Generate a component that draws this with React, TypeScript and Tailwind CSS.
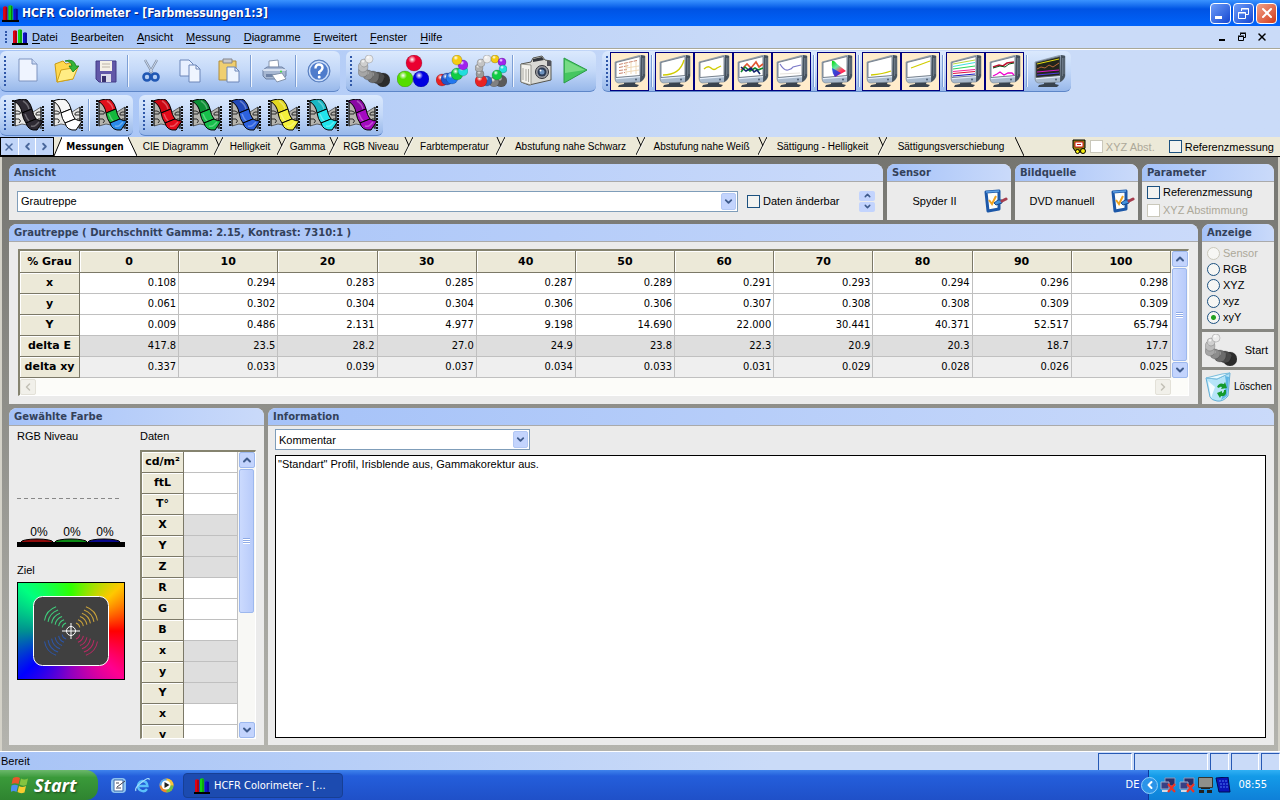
import { useState } from "react"
import type { ReactNode } from "react"
import { ChevronDown, ChevronLeft, ChevronRight, ChevronUp, X } from "lucide-react"

const menus = ["Datei", "Bearbeiten", "Ansicht", "Messung", "Diagramme", "Erweitert", "Fenster", "Hilfe"]

const tabs = [
  { label: "CIE Diagramm", width: "w-[77px]" },
  { label: "Helligkeit", width: "w-[54px]" },
  { label: "Gamma", width: "w-[43px]" },
  { label: "RGB Niveau", width: "w-[66px]" },
  { label: "Farbtemperatur", width: "w-[83px]" },
  { label: "Abstufung nahe Schwarz", width: "w-[131px]" },
  { label: "Abstufung nahe Weiß", width: "w-[113px]" },
  { label: "Sättigung - Helligkeit", width: "w-[111px]" },
  { label: "Sättigungsverschiebung", width: "w-[128px]" },
]

const levels = ["0", "10", "20", "30", "40", "50", "60", "70", "80", "90", "100"]

const rows = [
  { name: "x", bg: "bg-white", values: ["0.108", "0.294", "0.283", "0.285", "0.287", "0.289", "0.291", "0.293", "0.294", "0.296", "0.298"] },
  { name: "y", bg: "bg-white", values: ["0.061", "0.302", "0.304", "0.304", "0.306", "0.306", "0.307", "0.308", "0.308", "0.309", "0.309"] },
  { name: "Y", bg: "bg-white", values: ["0.009", "0.486", "2.131", "4.977", "9.198", "14.690", "22.000", "30.441", "40.371", "52.517", "65.794"] },
  { name: "delta E", bg: "bg-[#dedede]", values: ["417.8", "23.5", "28.2", "27.0", "24.9", "23.8", "22.3", "20.9", "20.3", "18.7", "17.7"] },
  { name: "delta xy", bg: "bg-[#efefef]", values: ["0.337", "0.033", "0.039", "0.037", "0.034", "0.033", "0.031", "0.029", "0.028", "0.026", "0.025"] },
]

const colorRows = ["cd/m²", "ftL", "T°", "X", "Y", "Z", "R", "G", "B", "x", "y", "Y", "x", "y"]
const grayRows = [3, 4, 5, 9, 10, 11]

/* ---------- icons ---------- */

function Svg({ children }: { children: ReactNode }) {
  return (
    <svg width="32" height="32" viewBox="0 0 32 32" fill="none" className="shrink-0" aria-hidden="true">
      {children}
    </svg>
  )
}

function AppLogo({ size = 16 }: { size?: number }) {
  return (
    <svg width={size} height={size} viewBox="0 0 16 16" className="shrink-0" aria-hidden="true">
      <path d="M0 14h16v2H0z" fill="#000" />
      <path d="M1 2q2-1.500 4 0v12H1z" fill="#e00012" />
      <path d="M6 1q2-1.500 4 0v13H6z" fill="#12d412" />
      <path d="M11 4q2-1.500 4 0v10h-4z" fill="#1010c8" />
      <path d="M4 2v12M9 1v13M14 4v10" stroke="#000" strokeOpacity=".4" />
    </svg>
  )
}

function Ball({ x, y, r, color }: { x: number; y: number; r: number; color: string }) {
  const id = "ball" + color.slice(1)
  return (
    <>
      <radialGradient id={id} cx=".38" cy=".28" r=".7">
        <stop offset="0" stopColor="#fff" />
        <stop offset=".35" stopColor={color} />
        <stop offset="1" stopColor={color} />
      </radialGradient>
      <circle cx={x} cy={y} r={r} fill={`url(#${id})`} stroke="#000" strokeOpacity=".3" strokeWidth=".6" />
    </>
  )
}

function Balls({ list }: { list: [number, number, number, string][] }) {
  return (
    <Svg>
      {list.map(([x, y, r, color], i) => (
        <Ball key={i} x={x} y={y} r={r} color={color} />
      ))}
    </Svg>
  )
}

const grayBalls: [number, number, number, string][] = [
  [25, 25, 7, "#2c2c2c"], [20, 23, 6, "#4a4a4a"], [15, 22, 6, "#6c6c6c"], [10, 20, 5, "#8c8c8c"],
  [5, 17, 5, "#a6a6a6"], [5, 12, 5, "#bcbcbc"], [6, 8, 4, "#cfcfcf"], [11, 4, 4, "#ececec"],
]
const primaryBalls: [number, number, number, string][] = [
  [17, 8, 8, "#ea0030"], [8, 24, 8, "#55dd00"], [24, 24, 8, "#0000e0"],
]
const colorBalls: [number, number, number, string][] = [
  [6, 25, 6, "#e82222"], [11, 24, 6, "#2255cc"], [16, 23, 6, "#2277ee"], [21, 19, 6, "#11cc44"],
  [27, 16, 5, "#22dddd"], [27, 10, 5, "#a022ee"], [21, 5, 5, "#f5cc11"],
]
const ringBalls: [number, number, number, string][] = [
  [26, 26, 6, "#5a5a5a"], [19, 27, 5, "#808080"], [12, 26, 5, "#3366bb"], [6, 26, 6, "#e82222"],
  [5, 19, 4, "#9a9a9a"], [4, 13, 4, "#b0b0b0"], [6, 8, 4, "#c4c4c4"], [12, 4, 4, "#ececec"],
  [20, 4, 4, "#f5cc11"], [27, 7, 4, "#a022ee"], [28, 14, 4, "#22dddd"], [22, 20, 5, "#11cc44"],
]

function Monitor({ children, dark = false }: { children?: ReactNode; dark?: boolean }) {
  return (
    <Svg>
      <path d="M10 26h12l-1 3 4 1-2 2H4l1-2 5-1z" fill="#39434e" />
      <path d="M1 7L27 0l4 1v20q-1 4-5 6L4 28q-3-1-3-4z" fill="#a9bacd" stroke="#76838f" strokeWidth=".6" />
      <path d="M27 0l4 1v20q-1 4-5 6z" fill="#46525e" />
      <path d="M28.500 3v18M30 3v16" stroke="#8391a0" strokeWidth=".6" />
      <path d="M2 23.500l24-2" stroke="#e4edf8" strokeWidth="1.500" />
      <path d="M2 7.500L26 1.500v19L2 22.500z" fill={dark ? "#22251c" : "#fff"} stroke="#5f6b77" strokeWidth=".8" />
      <circle cx="22" cy="24.500" r="1" fill="#4f5f74" />
      {children}
    </Svg>
  )
}

function Film({ colors, white = false }: { colors: [string, string, string]; white?: boolean }) {
  return (
    <Svg>
      <path d="M3 3h6l12 10 8-5v21l-9-2-10-2-7 2z" fill={white ? "#e8e8e6" : "#b5b4ae"} stroke="#444" strokeWidth=".8" />
      <path d="M1 1v27M31 7v25" stroke="#111" strokeWidth="2" strokeDasharray="2 1" />
      <path d="M3 3v24M29 8v22" stroke="#111" />
      <path d="M3 12h3q4 1 2 3H3M3 20h4q3 2 0 4M29 13h-3q-3 1-2 3h5M29 20h-3" stroke="#2a2a2a" />
      <path d="M2 2Q10-1 15 1q4 4 5 9l-10 4Q9 6 2 2z" fill={colors[0]} stroke="#000" />
      <path d="M20 10q1 6 4 10l-10 4q-3-4-4-10z" fill={colors[1]} stroke="#000" />
      <path d="M24 20q3 2 7 2l-6 9q-9 1-11-7z" fill={colors[2]} stroke="#000" />
      <path d="M11 2q5 3 6 8M13 15q2 5 4 7M19 27q3 1 5-1l3-3" stroke="#fff" strokeOpacity=".3" strokeWidth="1.500" />
    </Svg>
  )
}

const NewIcon = () => (
  <Svg>
    <path d="M7 4h13l5 5v17H7z" fill="#eff4ff" stroke="#7d93bf" />
    <path d="M20 4v5h5" fill="#c9d8f4" stroke="#7d93bf" />
  </Svg>
)
const OpenIcon = () => (
  <Svg>
    <path d="M4 9l8-3 3 3 7-2v17L6 27z" fill="#ffd84e" stroke="#c79a14" />
    <path d="M10 15l17-3-5 12L6 27z" fill="#ffec84" stroke="#d0a21a" />
    <path d="M14 6q9-3 11 5h3l-6 6-4-6h3q-1-5-7-5z" fill="#35b53a" stroke="#147a1a" strokeWidth=".8" />
  </Svg>
)
const SaveIcon = () => (
  <Svg>
    <path d="M6 6h20v21H9l-3-3z" fill="#6258a8" stroke="#423a86" />
    <path d="M10 6h12v10H10z" fill="#f6f1e6" />
    <path d="M12 9h8M12 12h8" stroke="#bdb4a8" />
    <path d="M11 19h10v8H11z" fill="#dcdcea" />
    <path d="M12 21h4v6h-4z" fill="#38306e" />
  </Svg>
)
const CutIcon = () => (
  <Svg>
    <path d="M10 5l8 14M22 5l-8 14" stroke="#7f8fa8" strokeWidth="2.400" />
    <path d="M10 5l8 14M22 5l-8 14" stroke="#e2ebf7" strokeWidth=".8" />
    <circle cx="12" cy="22" r="3.500" stroke="#2158b4" strokeWidth="2.600" />
    <circle cx="20" cy="22" r="3.500" stroke="#2158b4" strokeWidth="2.600" />
  </Svg>
)
const CopyIcon = () => (
  <Svg>
    <path d="M6 5h9l4 4v12H6z" fill="#e8f0ff" stroke="#6c86b8" />
    <path d="M15 10h7l4 4v13H15z" fill="#eff5ff" stroke="#6c86b8" />
    <path d="M22 10v4h4" stroke="#6c86b8" />
  </Svg>
)
const PasteIcon = () => (
  <Svg>
    <path d="M6 6h17v19H6z" fill="#f0cf70" stroke="#b08c3a" />
    <path d="M10 4h9v4h-9z" fill="#c9c9cc" stroke="#85858a" />
    <path d="M14 12h8l4 4v11H14z" fill="#edf4ff" stroke="#6c86b8" />
    <path d="M22 12v4h4" stroke="#6c86b8" />
  </Svg>
)
const PrintIcon = () => (
  <Svg>
    <path d="M11 6l9-1 1 9H11z" fill="#fff" stroke="#8796ae" />
    <path d="M5 15l4-3h15l4 3v6l-5 3H8l-3-3z" fill="#a6b7d2" stroke="#6d80a3" />
    <path d="M5 15h23" stroke="#e9effa" strokeWidth="1.500" />
    <path d="M8 19h14v3H8z" fill="#6f83a6" />
    <path d="M14 20l10-2 4 6-9 3z" fill="#fff" stroke="#8393ac" />
    <circle cx="23" cy="16.500" r="1" fill="#3edc3e" />
  </Svg>
)
const HelpIcon = () => (
  <Svg>
    <circle cx="16" cy="16" r="11" fill="#4f7ccc" stroke="#5b80bd" />
    <circle cx="16" cy="16" r="9.500" stroke="#cfe0fa" strokeWidth="1.500" />
    <path d="M12.500 13.500q0-4 3.500-4t3.500 3.300q0 2-3.300 4.200V19" stroke="#fff" strokeWidth="2.400" />
    <circle cx="16.200" cy="22" r="1.500" fill="#fff" />
  </Svg>
)
const CameraIcon = () => (
  <Svg>
    <path d="M1 9l10-2 2-4 9-2 3 4 6 1v19L9 30 1 27z" fill="#d9d9d4" stroke="#55554f" />
    <path d="M1 9l10 1v20l-10-3z" fill="#f2f1ec" stroke="#77776f" strokeWidth=".7" />
    <path d="M3 13v12M6 14v12M8.500 14v13" stroke="#aaa9a2" />
    <path d="M13 4l9-2 2 3-11 2z" fill="#33363c" />
    <path d="M27 6h4v5h-4z" fill="#50525a" />
    <circle cx="22" cy="17" r="6.500" fill="#9a9ca2" stroke="#33353b" />
    <circle cx="22" cy="17" r="4.500" fill="#2c3c55" />
    <circle cx="22" cy="17" r="2.500" fill="#6d93c0" />
    <circle cx="20.500" cy="15.500" r="1" fill="#fff" />
  </Svg>
)
const PlayIcon = () => (
  <Svg>
    <path d="M5 3l23 12L5 28z" fill="#45c660" stroke="#2b9b46" strokeLinejoin="round" />
    <path d="M6 5l20 10-20 3z" fill="#83e08f" fillOpacity=".8" />
  </Svg>
)
const SettingsIcon = () => (
  <svg width="26" height="26" viewBox="0 0 26 26" fill="none" aria-hidden="true">
    <path d="M4 4l13-1v18l-11 2z" fill="#fdfdfa" stroke="#1d58a8" strokeWidth="3" strokeLinejoin="round" />
    <path d="M4 4l13-1" stroke="#5da0e4" strokeWidth="1.500" />
    <path d="M7 12l3 4 4-8" stroke="#efa21f" strokeWidth="2" />
    <path d="M12 15l4-3h4v3l-6 2z" fill="#4291dc" stroke="#184a8e" />
    <path d="M20 13l4-2" stroke="#a53c4d" strokeWidth="3" strokeLinecap="round" />
  </svg>
)
const TrashIcon = () => (
  <Svg>
    <path d="M4 7l11 1 13-6-2 23q-5 6-11 5-6-1-7-4z" fill="#b5e4f8" stroke="#63aed6" />
    <path d="M4 7l11 1 13-6-8 1z" fill="#e9f9ff" stroke="#79bddd" />
    <path d="M6 10l7 6-4 11z" fill="#f2fcff" />
    <path d="M23 5q3 10-4 24l6-4 2-19z" fill="#5fb6e4" />
    <path d="M15 16q2-5 7-3l1-2 2 6-6 1 1-2q-2-1-3 1zM24 19q1 7-5 6l-1 2-3-5 5-2v2q2 0 2-3z" fill="#149a2c" />
  </Svg>
)

/* ---------- small building blocks ---------- */

function ToolButton({ label, children, checked = false }: { label: string; children: ReactNode; checked?: boolean }) {
  return (
    <button
      type="button"
      aria-label={label}
      className={`flex h-[39px] w-[39px] items-center justify-center ${checked ? "border border-[#000080] bg-[#ffeccb]" : ""}`}
    >
      {children}
    </button>
  )
}

function ToolBar({ children }: { children: ReactNode }) {
  return (
    <div className="flex h-[41px] items-center rounded-md border-b border-[#5d86c8] bg-linear-to-b from-[#dbe9fd] via-[#c3d8f8] to-[#98b8ea] pr-[2px]">
      <div className="mr-[2px] ml-[4px] h-[30px] border-l-2 border-dotted border-[#2f57a8]" />
      {children}
    </div>
  )
}

function Sep() {
  return (
    <div className="flex w-[6px] justify-center">
      <div className="h-8 w-[2px] border-l border-r border-l-[#7d9fd5] border-r-white/80" />
    </div>
  )
}

function Panel({ title, className = "", children }: { title: string; className?: string; children: ReactNode }) {
  return (
    <section className={`flex min-h-0 flex-col overflow-hidden rounded-t-lg bg-[#ebebeb] ${className}`}>
      <h2 className="h-[18px] shrink-0 truncate border-b border-[#aaa] bg-linear-to-r from-[#a5c2f8] to-[#cadafa] pl-[5px] font-['DejaVu_Sans'] text-[10px] leading-[17px] font-bold text-[#33415a]">
        {title}
      </h2>
      {children}
    </section>
  )
}

function Check({ label, disabled = false }: { label: string; disabled?: boolean }) {
  return (
    <label className={`flex items-center gap-[3px] whitespace-nowrap ${disabled ? "text-[#aca899]" : ""}`}>
      <input
        type="checkbox"
        disabled={disabled}
        className="h-[13px] w-[13px] appearance-none border border-[#1c5180] bg-[#f3f3f1] checked:bg-[#21a121] disabled:border-[#cac8bb] disabled:bg-white"
      />
      {label}
    </label>
  )
}

function ScrollButton({ label, children, disabled = false }: { label: string; children: ReactNode; disabled?: boolean }) {
  return (
    <button
      type="button"
      aria-label={label}
      disabled={disabled}
      className="flex h-[16px] w-[16px] shrink-0 items-center justify-center rounded-xs border border-[#9db8ee] bg-[#c3d4fd] text-[#3f5b8c] disabled:border-[#e3e1d8] disabled:bg-[#f1f0ea] disabled:text-[#c2c0b6]"
    >
      {children}
    </button>
  )
}

function VScroll({ thumb }: { thumb: string }) {
  return (
    <div className="flex w-[17px] shrink-0 flex-col items-center bg-[#f8f8f5]">
      <ScrollButton label="Nach oben">
        <ChevronUp size={12} strokeWidth={4} />
      </ScrollButton>
      <div className="min-h-0 w-[15px] flex-1 py-px">
        <div className={`flex flex-col items-center justify-center gap-px rounded-xs border border-[#9db8ee] bg-linear-to-r from-[#cbdafe] to-[#b8cbfa] ${thumb}`}>
          {[0, 1, 2].map((i) => (
            <div key={i} className="h-px w-[7px] bg-[#8eaae6] shadow-[0_1px_white]" />
          ))}
        </div>
      </div>
      <ScrollButton label="Nach unten">
        <ChevronDown size={12} strokeWidth={4} />
      </ScrollButton>
    </div>
  )
}

function Dropdown({ id, label, value, className }: { id: string; label: string; value: string; className: string }) {
  return (
    <div className={`relative h-[21px] ${className}`}>
      <select
        id={id}
        aria-label={label}
        className="block h-full w-full appearance-none border border-[#7f9db9] bg-white pl-[3px] text-[11px] outline-none"
      >
        <option>{value}</option>
      </select>
      <span className="pointer-events-none absolute top-[2px] right-[2px] flex h-[17px] w-[15px] items-center justify-center rounded-xs border border-[#b3c8f4] bg-[#c3d4fd] text-[#3f5b8c]">
        <ChevronDown size={11} strokeWidth={4} />
      </span>
    </div>
  )
}

function TabEdge() {
  return (
    <svg width="9" height="19" viewBox="0 0 9 19" fill="none" className="shrink-0" aria-hidden="true">
      <path d="M0 18L9 0M1 0l4 9" stroke="#000" />
      <path d="M1 18L9 2" stroke="#fff" strokeOpacity=".7" />
    </svg>
  )
}

/* ---------- sections ---------- */

function TitleBar() {
  return (
    <header className="flex h-[26px] shrink-0 items-center bg-linear-to-b from-[#3a93ff] via-[#0053e4] via-35% to-[#0164fb] pr-[3px] pl-[2px]">
      <AppLogo size={17} />
      <h1 className="flex-1 pl-[3px] font-['DejaVu_Sans_Condensed'] text-[12px] font-bold text-white [text-shadow:1px_1px_#0a1f7a]">
        HCFR Colorimeter - [Farbmessungen1:3]
      </h1>
      <div className="flex gap-[2px]">
        <button type="button" aria-label="Minimieren" className="flex h-[21px] w-[21px] items-end rounded-sm border border-white bg-linear-to-br from-[#6f9cf8] to-[#1544d0] p-1">
          <span className="h-[3px] w-[7px] bg-white" />
        </button>
        <button type="button" aria-label="Wiederherstellen" className="flex h-[21px] w-[21px] items-center justify-center rounded-sm border border-white bg-linear-to-br from-[#6f9cf8] to-[#1544d0]">
          <svg width="13" height="13" viewBox="0 0 13 13" fill="none" stroke="#fff" aria-hidden="true">
            <path d="M4.500 4V1.500h7v6H9M4 2h8M1.500 5.500h7v6h-7zM1 6h8" />
          </svg>
        </button>
        <button type="button" aria-label="Schließen" className="flex h-[21px] w-[21px] items-center justify-center rounded-sm border border-white bg-linear-to-br from-[#f0a088] to-[#d1350c] text-white">
          <X size={16} strokeWidth={3} />
        </button>
      </div>
    </header>
  )
}

function MenuBar() {
  return (
    <nav className="flex h-[23px] shrink-0 items-center border-b border-[#a9a898] bg-linear-to-r from-[#a8c5f6] to-[#cadbf8] to-60% pl-[5px]">
      <div className="mr-[5px] h-[12px] border-l-2 border-dotted border-[#2f57a8]" />
      <AppLogo />
      <div className="flex flex-1 gap-[13px] pl-[4px]">
        {menus.map((m) => (
          <button key={m} type="button">
            <span className="underline underline-offset-2">{m[0]}</span>
            {m.slice(1)}
          </button>
        ))}
      </div>
      <div className="flex gap-[9px] pr-[12px]">
        <button type="button" aria-label="Fenster minimieren" className="flex h-[12px] w-[12px] items-end justify-center pb-[2px]">
          <span className="h-[2px] w-[6px] bg-black" />
        </button>
        <button type="button" aria-label="Fenster wiederherstellen">
          <svg width="10" height="10" viewBox="0 0 10 10" fill="none" stroke="#000" aria-hidden="true">
            <path d="M3.500 3V1.500h5v4H7M3 1h6M1.500 4.500h5v4h-5zM1 4h6" />
          </svg>
        </button>
        <button type="button" aria-label="Fenster schließen">
          <X size={12} strokeWidth={3} />
        </button>
      </div>
    </nav>
  )
}

function ToolBars() {
  return (
    <div className="flex shrink-0 flex-col gap-[3px] border-t border-white bg-linear-to-r from-[#a5c3f6] to-[#cadbf8] to-60% pt-px pb-px">
      <div className="flex gap-[6px]">
        <ToolBar>
          <ToolButton label="Neu"><NewIcon /></ToolButton>
          <ToolButton label="Öffnen"><OpenIcon /></ToolButton>
          <ToolButton label="Speichern"><SaveIcon /></ToolButton>
          <Sep />
          <ToolButton label="Ausschneiden"><CutIcon /></ToolButton>
          <ToolButton label="Kopieren"><CopyIcon /></ToolButton>
          <ToolButton label="Einfügen"><PasteIcon /></ToolButton>
          <Sep />
          <ToolButton label="Drucken"><PrintIcon /></ToolButton>
          <Sep />
          <ToolButton label="Hilfe"><HelpIcon /></ToolButton>
        </ToolBar>
        <ToolBar>
          <ToolButton label="Graustufen messen"><Balls list={grayBalls} /></ToolButton>
          <ToolButton label="Primärfarben messen"><Balls list={primaryBalls} /></ToolButton>
          <ToolButton label="Sättigung messen"><Balls list={colorBalls} /></ToolButton>
          <ToolButton label="Alles messen"><Balls list={ringBalls} /></ToolButton>
          <Sep />
          <ToolButton label="Kamera"><CameraIcon /></ToolButton>
          <ToolButton label="Kontinuierlich messen"><PlayIcon /></ToolButton>
        </ToolBar>
        <ToolBar>
          <ToolButton label="Messungen" checked>
            <Monitor>
              <path d="M5 9.500l18-4M5 12.500l10-2M5 15.500l8-1M5 18.500l6-1" stroke="#c9826c" strokeDasharray="4 1" />
              <path d="M12 8v12M17 7v12M22 6v13M12 13l13-2M12 17l13-2" stroke="#efd9b8" />
            </Monitor>
          </ToolButton>
          <Sep />
          <ToolButton label="Helligkeit" checked>
            <Monitor><path d="M4 20q17 0 21-15" stroke="#d0cc00" strokeWidth="1.300" /></Monitor>
          </ToolButton>
          <ToolButton label="Gamma" checked>
            <Monitor><path d="M6 14q4-4 7-1t6 0l4-2" stroke="#d0cc00" strokeWidth="1.300" /></Monitor>
          </ToolButton>
          <ToolButton label="RGB Niveau" checked>
            <Monitor>
              <path d="M4 15l6-6 4 4 5-6 3 5 4-3" stroke="#e25532" strokeWidth="1.600" />
              <path d="M4 17l4-5 5 4 5-3 3 2 5-2" stroke="#118a2a" strokeWidth="1.600" />
              <path d="M4 12l5 4 5-3 3 4 3-2 3 4" stroke="#10246e" strokeWidth="1.600" />
            </Monitor>
          </ToolButton>
          <ToolButton label="Farbtemperatur" checked>
            <Monitor>
              <path d="M4 9q4 7 8 6t5-3l8-2" stroke="#7a78c8" strokeWidth="1.200" />
              <path d="M4 19l20-1" stroke="#e5e2dd" />
            </Monitor>
          </ToolButton>
          <Sep />
          <ToolButton label="CIE Diagramm" checked>
            <Monitor>
              <linearGradient id="cie" x1="0" y1="0" x2=".7" y2="1">
                <stop offset="0" stopColor="#00d800" />
                <stop offset=".4" stopColor="#66e8a8" />
                <stop offset=".7" stopColor="#f46" />
                <stop offset="1" stopColor="#f03" />
              </linearGradient>
              <path d="M11 6q2-1 5 3l9 7-11 6q-4-8-3-16z" fill="url(#cie)" />
              <path d="M11 13q0 5 3 9l6-4z" fill="#1733e8" fillOpacity=".8" />
            </Monitor>
          </ToolButton>
          <Sep />
          <ToolButton label="Nahe Schwarz" checked>
            <Monitor><path d="M5 20q12-1 20-4" stroke="#d0cc00" strokeWidth="1.300" /></Monitor>
          </ToolButton>
          <ToolButton label="Nahe Weiß" checked>
            <Monitor><path d="M6 13l19-7" stroke="#d0cc00" strokeWidth="1.300" /></Monitor>
          </ToolButton>
          <Sep />
          <ToolButton label="Sättigung" checked>
            <Monitor>
              <path d="M3 9l22-4" stroke="#bcd83c" />
              <path d="M3 11.500l22-4" stroke="#3ce0e0" />
              <path d="M3 14l22-3" stroke="#2bd65c" />
              <path d="M3 16.500l22-2" stroke="#f0209c" />
              <path d="M3 18.500l22-2" stroke="#e01038" />
              <path d="M3 21l22-2" stroke="#1818c0" />
            </Monitor>
          </ToolButton>
          <ToolButton label="Sättigungsverschiebung" checked>
            <Monitor>
              <path d="M4 12l6-2 4 1 4-3 7-1" stroke="#c01030" strokeWidth="1.600" />
              <path d="M4 13l7-2 5 1 4-3 5-1" stroke="#105018" />
              <path d="M4 21l4-2 3-2 4 3 4-2 4 0 2 2" stroke="#f000d0" strokeWidth="1.300" />
            </Monitor>
          </ToolButton>
          <Sep />
          <ToolButton label="Kombiniert">
            <Monitor dark>
              <path d="M3 9l22-5" stroke="#e8e010" />
              <path d="M3 14l4-2 4 1 4-3 4 2 6-4" stroke="#b8673a" />
              <path d="M3 17l22-2" stroke="#d41cc8" />
              <path d="M3 20l22-2" stroke="#5040e0" />
            </Monitor>
          </ToolButton>
        </ToolBar>
      </div>
      <div className="flex gap-[6px]">
        <ToolBar>
          <ToolButton label="Schwarz"><Film colors={["#2e2a33", "#2e2a33", "#2e2a33"]} white /></ToolButton>
          <ToolButton label="Weiß"><Film colors={["#f6f6f6", "#ffffff", "#ffffff"]} white /></ToolButton>
          <Sep />
          <ToolButton label="RGB"><Film colors={["#e0101c", "#14b83c", "#2c8bea"]} /></ToolButton>
        </ToolBar>
        <ToolBar>
          <ToolButton label="Rot"><Film colors={["#cc0614", "#e40a1a", "#e40a1a"]} /></ToolButton>
          <ToolButton label="Grün"><Film colors={["#0c8e34", "#18c04c", "#18c04c"]} /></ToolButton>
          <ToolButton label="Blau"><Film colors={["#2148b8", "#2d62e0", "#2d62e0"]} /></ToolButton>
          <ToolButton label="Gelb"><Film colors={["#e2d820", "#f4f03c", "#f4f03c"]} /></ToolButton>
          <ToolButton label="Cyan"><Film colors={["#18b8c4", "#22e4ec", "#22e4ec"]} /></ToolButton>
          <ToolButton label="Magenta"><Film colors={["#8a08a4", "#a40ac0", "#a40ac0"]} /></ToolButton>
        </ToolBar>
      </div>
    </div>
  )
}

function TabStrip() {
  return (
    <div className="flex h-[20px] shrink-0 border-b border-black bg-[#ece9d8] text-[10px]">
      <div className="flex w-[54px] border border-black bg-[#c1d5f8] text-[#4a689c]">
        <button type="button" aria-label="Tab schließen" className="flex flex-1 items-center justify-center border-r border-white"><X size={12} strokeWidth={3} /></button>
        <button type="button" aria-label="Vorheriger Tab" className="flex flex-1 items-center justify-center border-r border-white"><ChevronLeft size={11} strokeWidth={4} /></button>
        <button type="button" aria-label="Nächster Tab" className="flex flex-1 items-center justify-center"><ChevronRight size={11} strokeWidth={4} /></button>
      </div>
      <svg width="8" height="19" viewBox="0 0 8 19" aria-hidden="true"><path d="M0 19L8 0v19z" fill="#fff" /><path d="M0 19L8 0" stroke="#000" /></svg>
      <button type="button" className="w-[66px] bg-white font-['DejaVu_Sans_Condensed'] font-bold">Messungen</button>
      <svg width="9" height="19" viewBox="0 0 9 19" aria-hidden="true"><path d="M0 0l9 19H0z" fill="#fff" /><path d="M0 0l9 19" stroke="#000" /></svg>
      {tabs.map((t, i) => (
        <div key={t.label} className="flex">
          {i > 0 && <TabEdge />}
          <button type="button" className={`whitespace-nowrap ${t.width}`}>{t.label}</button>
        </div>
      ))}
      <svg width="9" height="19" viewBox="0 0 9 19" aria-hidden="true"><path d="M0 0l9 19" stroke="#000" /></svg>
      <div className="flex flex-1 items-center justify-end pr-[6px] text-[11px]">
        <svg width="15" height="15" viewBox="0 0 15 15" className="mr-[3px]" aria-hidden="true">
          <path d="M1 1h12v8l-3 4H4L1 9z" fill="#8a8014" stroke="#000" />
          <path d="M3 3h8v5H3z" fill="#fff" stroke="#d01010" />
          <path d="M5 5.500h4" stroke="#d01010" />
          <circle cx="11" cy="12" r="2.500" fill="#f4ec10" stroke="#000" />
          <circle cx="5.500" cy="12.500" r="2" fill="#f4ec10" stroke="#000" />
        </svg>
        <Check label="XYZ Abst." disabled />
        <div className="ml-[14px]"><Check label="Referenzmessung" /></div>
      </div>
    </div>
  )
}

function MeasureTable() {
  const headCell = "border-r border-b border-[#7b7867] bg-[#ece9d8] shadow-[inset_1px_1px_white] font-['DejaVu_Sans'] text-[11px] font-bold"
  return (
    <div className="mx-[9px] mt-[7px] mb-[7px] border-t-2 border-l-2 border-r border-b border-t-[#85836f] border-l-[#85836f] border-r-white border-b-white">
      <div className="flex">
        <table className="w-full flex-1 table-fixed border-separate border-spacing-0 font-['DejaVu_Sans_Condensed']">
          <thead>
            <tr className="h-[22px]">
              <th className={`w-[60px] ${headCell}`}>% Grau</th>
              {levels.map((l) => (
                <th key={l} scope="col" className={headCell}>{l}</th>
              ))}
            </tr>
          </thead>
          <tbody>
            {rows.map((row) => (
              <tr key={row.name} className="h-[21px]">
                <th scope="row" className={headCell}>{row.name}</th>
                {row.values.map((v, i) => (
                  <td key={i} className={`border-r border-b border-[#c0c0c0] pr-[2px] text-right ${row.bg}`}>{v}</td>
                ))}
              </tr>
            ))}
          </tbody>
        </table>
        <VScroll thumb="h-full" />
      </div>
      <div className="flex h-[17px] items-center justify-between bg-[#fcfcf9] pr-[17px]">
        <ScrollButton label="Nach links" disabled><ChevronLeft size={12} strokeWidth={3} /></ScrollButton>
        <ScrollButton label="Nach rechts" disabled><ChevronRight size={12} strokeWidth={3} /></ScrollButton>
      </div>
    </div>
  )
}

function LevelChart() {
  return (
    <svg width="108" height="104" viewBox="0 0 108 104" aria-label="RGB Niveau">
      <path d="M0 55.500h105" stroke="#888" strokeDasharray="4 3" />
      <ellipse cx="20" cy="99" rx="16" ry="3" fill="#8d0a0a" stroke="#000" />
      <ellipse cx="54" cy="99" rx="16" ry="3" fill="#0a8a14" stroke="#000" />
      <ellipse cx="87" cy="99" rx="16" ry="3" fill="#08088c" stroke="#000" />
      <path d="M0 99h108v5H0z" fill="#000" />
      {[22, 55, 88].map((x) => (
        <text key={x} x={x} y="93" textAnchor="middle" fontSize="12">0%</text>
      ))}
    </svg>
  )
}

function Target() {
  const quarter = (color: string, turn: number) => (
    <g stroke={color} transform={`rotate(${turn})`} fill="none">
      {[10, 14, 18, 22, 26, 30].map((r) => (
        <path key={r} d={`M${-r * 0.3} ${-r * 0.9}Q0 ${-r * 1.08} ${r * 0.3} ${-r * 0.9}`} />
      ))}
    </g>
  )
  return (
    <div className="flex h-[98px] w-[108px] items-center justify-center border border-black bg-[conic-gradient(#30ff00,#ffc800_48deg,#ff0000_90deg,#ff0090_132deg,#9000c0_180deg,#0000ff_228deg,#009090_270deg,#00ff80_312deg,#30ff00)]">
      <svg width="76" height="70" viewBox="-38 -35 76 70" aria-label="Ziel">
        <rect x="-37.500" y="-34.500" width="75" height="69" rx="9" fill="#404040" stroke="#fff" />
        {quarter("#3fce7c", -50)}
        {quarter("#c9a23a", 50)}
        {quarter("#b92a63", 130)}
        {quarter("#2c56a8", 230)}
        <path d="M-9 0H9M0-8V8" stroke="#fff" />
        <circle r="4.500" stroke="#fff" fill="none" />
      </svg>
    </div>
  )
}

function StatusBar() {
  return (
    <footer className="flex h-[19px] shrink-0 items-center border-t border-white bg-linear-to-r from-[#a8c4f6] to-[#cadbf8] to-60% pl-px">
      <span className="flex-1">Bereit</span>
      <div className="flex h-[17px] gap-[2px]">
        {["w-[34px]", "w-[74px]", "w-[19px]", "w-[28px]", "w-[19px]"].map((w, i) => (
          <div key={i} className={`border-t border-r border-l border-t-[#2659b4] border-r-white border-l-[#2659b4] ${w}`} />
        ))}
      </div>
    </footer>
  )
}

function NetIcon() {
  return (
    <svg width="17" height="16" viewBox="0 0 17 16" aria-hidden="true">
      <path d="M5 1h10v8H5z" fill="#28306a" stroke="#8e97b8" />
      <path d="M1 5h8v7H1z" fill="#384084" stroke="#a2abc8" />
      <path d="M2 13h7v2H2z" fill="#d5d9e4" />
      <path d="M8 7l7 8M15 7l-7 8" stroke="#ee3424" strokeWidth="2.200" />
    </svg>
  )
}

function TaskBar() {
  return (
    <div className="flex h-[30px] shrink-0 bg-linear-to-b from-[#3f83ec] via-[#245edb] via-20% to-[#1f50c8] font-['DejaVu_Sans_Condensed'] text-white">
      <button type="button" className="flex w-[98px] items-center gap-[5px] rounded-r-xl bg-linear-to-b from-[#6bb86b] via-[#3a9a3a] via-25% to-[#2f8430] pl-[11px] font-['Open_Sans'] text-[18px] leading-none font-bold italic [text-shadow:1px_1px_2px_#1c4a1c]">
        <svg width="18" height="18" viewBox="0 0 18 18" aria-hidden="true">
          <path d="M2 2q4-2 7 0L7.500 8Q4 6.500.5 8z" fill="#e8562c" />
          <path d="M10 2.500q3 2 7 0L15.500 9q-4 1.500-7-.5z" fill="#84c440" />
          <path d="M.5 9.500q3-1.500 6.500 0L5.500 16q-3-2-6 0z" fill="#4c8ff0" />
          <path d="M8 10q3 2 7 0l-1.500 6.500q-4 1.500-7-.5z" fill="#f8cc30" />
        </svg>
        Start
      </button>
      <div className="flex items-center gap-[9px] pl-[13px]">
        <button type="button" aria-label="Desktop anzeigen">
          <svg width="15" height="15" viewBox="0 0 15 15" aria-hidden="true">
            <rect width="15" height="15" rx="4" fill="#8fc3f0" />
            <path d="M3 2h9v11H3z" fill="#fff" stroke="#3c6cac" />
            <path d="M6 9l8-6M5 5h3M5 10h5" stroke="#445" />
          </svg>
        </button>
        <button type="button" aria-label="Internet Explorer">
          <svg width="15" height="15" viewBox="0 0 15 15" fill="none" aria-hidden="true">
            <path d="M12 11q-2 3-5 2-4-1-4-5t4-5q5 0 5.500 5H4" stroke="#5bc0fa" strokeWidth="2.300" />
            <path d="M1 13Q-1 10 7 4t7-2" stroke="#a5dcfa" strokeWidth="1.200" />
          </svg>
        </button>
        <button type="button" aria-label="Media Player">
          <svg width="15" height="15" viewBox="0 0 15 15" aria-hidden="true">
            <circle cx="7.500" cy="7.500" r="7" fill="#f08a2c" />
            <path d="M7.500.5a7 7 0 0 1 7 7h-7z" fill="#f4c83c" />
            <path d="M7.500.5a7 7 0 0 0-7 7h7z" fill="#4fa4f0" />
            <path d="M7.500 14.500a7 7 0 0 0 7-7h-7z" fill="#6dc048" />
            <circle cx="7" cy="7" r="4.500" fill="#fff" />
            <path d="M5.500 4l5 3-5 3z" fill="#222" />
          </svg>
        </button>
      </div>
      <button type="button" className="mt-[3px] mb-[2px] ml-[9px] flex w-[160px] items-center gap-[4px] rounded-sm border border-[#173f94] bg-[#1c4bb0] pl-[10px]">
        <AppLogo />
        HCFR Colorimeter - [...
      </button>
      <div className="ml-auto flex items-center pr-[9px]">DE</div>
      <div className="flex items-center gap-[2px] border-l border-[#0c3a9c] bg-linear-to-b from-[#2fb0f4] via-[#149be8] via-20% to-[#0f80d8] pr-[13px]">
        <button type="button" aria-label="Ausgeblendete Symbole" className="-ml-[8px] flex h-[17px] w-[17px] items-center justify-center rounded-full border border-[#8fd0fa] bg-[#2b94e8]">
          <ChevronLeft size={12} strokeWidth={4} />
        </button>
        <NetIcon />
        <NetIcon />
        <svg width="15" height="16" viewBox="0 0 15 16" aria-hidden="true">
          <path d="M.5.5h14v10H.5z" fill="#8f8f8a" stroke="#35352f" />
          <path d="M1 13h5v3H1zM9 13h5v3H9zM3 11h9v1H3z" fill="#222" />
        </svg>
        <svg width="16" height="16" viewBox="0 0 16 16" aria-hidden="true">
          <path d="M1 1l12-1 2 15H4z" fill="#0a14b8" stroke="#000a50" />
          <path d="M4 4h8M5 7h8M5 10h8" stroke="#4d7af2" strokeDasharray="2 1" />
        </svg>
        <span className="pl-[5px]">08:55</span>
      </div>
    </div>
  )
}

export default function App() {
  const [mode, setMode] = useState("xyY")
  const [comment, setComment] = useState("\"Standart\" Profil, Irisblende aus, Gammakorektur aus.")

  return (
    <div className="flex h-screen min-h-[640px] flex-col overflow-hidden bg-[#cadbf8] font-['Liberation_Sans',sans-serif] text-[11px] leading-[14px] text-black">
      <TitleBar />
      <MenuBar />
      <ToolBars />
      <TabStrip />

      <main className="flex min-h-0 flex-1 flex-col gap-[4px] border-x-2 border-[#d4d2c8] bg-linear-to-b from-[#757570] to-[#b4b4ae] pt-[7px] pr-[4px] pb-[6px] pl-[7px]">
        <div className="flex h-[56px] shrink-0 gap-[4px]">
          <Panel title="Ansicht" className="flex-1">
            <div className="flex flex-1 items-center pr-[8px] pl-[8px]">
              <Dropdown id="view" label="Ansicht" value="Grautreppe" className="flex-1" />
              <div className="w-[121px] pl-[9px]"><Check label="Daten änderbar" /></div>
              <div className="flex w-[16px] flex-col gap-px text-[#3f5b8c]">
                <button type="button" aria-label="Mehr" className="flex h-[10px] items-center justify-center rounded-xs bg-[#c3d4fd]"><ChevronUp size={9} strokeWidth={4} /></button>
                <button type="button" aria-label="Weniger" className="flex h-[10px] items-center justify-center rounded-xs bg-[#c3d4fd]"><ChevronDown size={9} strokeWidth={4} /></button>
              </div>
            </div>
          </Panel>
          <Panel title="Sensor" className="w-[124px]">
            <div className="flex flex-1 items-center pr-[3px]">
              <span className="flex-1 text-center">Spyder II</span>
              <button type="button" aria-label="Sensor einstellen"><SettingsIcon /></button>
            </div>
          </Panel>
          <Panel title="Bildquelle" className="w-[123px]">
            <div className="flex flex-1 items-center pr-[3px]">
              <span className="flex-1 text-center">DVD manuell</span>
              <button type="button" aria-label="Bildquelle einstellen"><SettingsIcon /></button>
            </div>
          </Panel>
          <Panel title="Parameter" className="w-[132px]">
            <div className="flex flex-col gap-[4px] pt-[3px] pl-[5px]">
              <Check label="Referenzmessung" />
              <Check label="XYZ Abstimmung" disabled />
            </div>
          </Panel>
        </div>

        <div className="flex h-[180px] shrink-0 gap-[4px]">
          <Panel title="Grautreppe ( Durchschnitt Gamma: 2.15, Kontrast: 7310:1 )" className="min-w-0 flex-1">
            <MeasureTable />
          </Panel>
          <div className="flex w-[72px] flex-col gap-[3px]">
            <Panel title="Anzeige" className="flex-1">
              <fieldset className="flex flex-col gap-[2px] pt-[4px] pl-[5px]">
                {["Sensor", "RGB", "XYZ", "xyz", "xyY"].map((m) => (
                  <label key={m} className={`flex items-center gap-[3px] ${m === "Sensor" ? "text-[#aca899]" : ""}`}>
                    <input
                      type="radio"
                      name="mode"
                      disabled={m === "Sensor"}
                      checked={mode === m}
                      onChange={() => setMode(m)}
                      className="h-[13px] w-[13px] appearance-none rounded-full border border-[#1c5180] bg-[#f6f6f4] checked:bg-[radial-gradient(circle,#21a121_0_2px,#f6f6f4_3px)] disabled:border-[#cac8bb]"
                    />
                    {m}
                  </label>
                ))}
              </fieldset>
            </Panel>
            <button type="button" className="flex h-[35px] items-center justify-between bg-[#ebebeb] pr-[6px] pl-[3px]">
              <Balls list={grayBalls} />
              Start
            </button>
            <button type="button" className="flex h-[34px] items-center bg-[#ebebeb] text-[10px]">
              <TrashIcon />
              Löschen
            </button>
          </div>
        </div>

        <div className="flex min-h-0 flex-1 gap-[4px]">
          <Panel title="Gewählte Farbe" className="w-[255px]">
            <div className="flex min-h-0 flex-1 justify-between pr-[8px] pb-[6px] pl-[8px]">
              <div className="flex w-[108px] flex-col pt-[3px]">
                <h3>RGB Niveau</h3>
                <LevelChart />
                <h3 className="pt-[16px] pb-[5px]">Ziel</h3>
                <Target />
              </div>
              <div className="flex min-h-0 w-[116px] flex-col pt-[3px]">
                <h3 className="pb-[7px]">Daten</h3>
                <div className="flex min-h-0 flex-1 border-t-2 border-l-2 border-r border-b border-t-[#85836f] border-l-[#85836f] border-r-white border-b-white bg-white">
                  <div className="min-h-0 flex-1 overflow-hidden">
                    <table className="w-full table-fixed border-separate border-spacing-0">
                      <tbody>
                        {colorRows.map((name, i) => (
                          <tr key={i} className="h-[21px]">
                            <th scope="row" className="w-[42px] border-r border-b border-[#7b7867] bg-[#ece9d8] font-['DejaVu_Sans'] shadow-[inset_1px_1px_white]">{name}</th>
                            <td className={`border-r border-b border-[#c0c0c0] ${grayRows.includes(i) ? "bg-[#dedede]" : "bg-white"}`} />
                          </tr>
                        ))}
                      </tbody>
                    </table>
                  </div>
                  <VScroll thumb="h-[57%]" />
                </div>
              </div>
            </div>
          </Panel>
          <Panel title="Information" className="min-w-0 flex-1">
            <div className="flex min-h-0 flex-1 flex-col gap-[5px] pt-[3px] pr-[8px] pb-[7px] pl-[7px]">
              <Dropdown id="info" label="Information" value="Kommentar" className="w-[255px]" />
              <textarea
                aria-label="Kommentar"
                value={comment}
                onChange={(e) => setComment(e.target.value)}
                className="min-h-0 w-full flex-1 resize-none border border-black bg-white px-[2px] py-px outline-none"
              />
            </div>
          </Panel>
        </div>
      </main>

      <StatusBar />
      <TaskBar />
    </div>
  )
}
